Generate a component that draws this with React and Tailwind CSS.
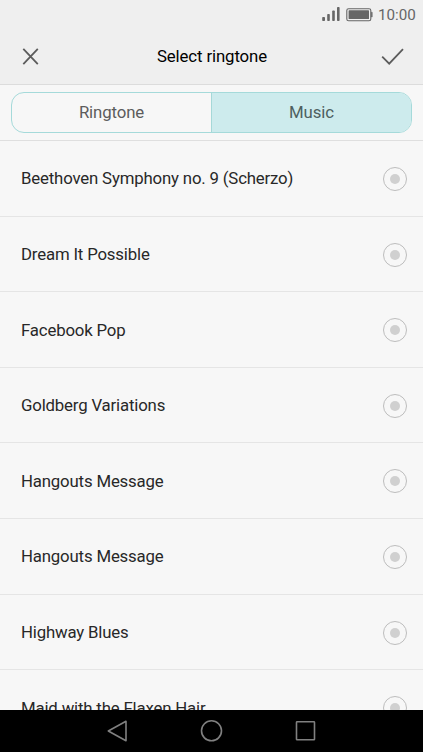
const songs = [
  "Beethoven Symphony no. 9 (Scherzo)",
  "Dream It Possible",
  "Facebook Pop",
  "Goldberg Variations",
  "Hangouts Message",
  "Hangouts Message",
  "Highway Blues",
  "Maid with the Flaxen Hair",
];

const StatusBar = () => {
  return (
    <div className="flex h-7 items-center justify-end pr-[7px] text-[#666666]">
      <svg width="52" height="28" viewBox="0 0 52 28" fill="currentColor">
        <rect x="0.2" y="17" width="2.8" height="4" rx="0.8" />
        <rect x="5.2" y="14" width="2.6" height="7" rx="0.8" />
        <rect x="10.2" y="10.5" width="2.6" height="10.5" rx="0.8" />
        <rect x="15" y="7" width="2.6" height="14" rx="0.8" />
        <rect x="24.8" y="8.7" width="24" height="12" rx="1.8" fill="none" stroke="currentColor" strokeWidth="1.1" />
        <rect x="26.6" y="10.3" width="20.4" height="8.8" rx="0.6" />
        <path d="M49.3 12.3h0.9v4.6h-0.9z" stroke="currentColor" strokeWidth="0.6" />
      </svg>
      <span className="ml-1 w-[38px] whitespace-nowrap pt-px text-[15.2px] leading-5">10:00</span>
    </div>
  );
};

const Header = () => {
  return (
    <header className="flex h-14 items-center justify-between pl-[22px] pr-[19px]">
      <button aria-label="Cancel" className="w-[21px]">
        <svg width="17" height="18" viewBox="0 0 17 18" fill="none" stroke="#5c5c5c" strokeWidth="1.8">
          <path d="M1.3 1.8L15.8 17.1M15.8 1.8L1.3 17.1" />
        </svg>
      </button>
      <h1 className="pt-px text-[16.8px] tracking-[-0.12px] text-black">Select ringtone</h1>
      <button aria-label="Confirm">
        <svg width="23" height="18" viewBox="0 0 23 18" fill="none" stroke="#5c5c5c" strokeWidth="1.8">
          <path d="M1.2 9.6L8.2 16.6L22 2.2" />
        </svg>
      </button>
    </header>
  );
};

const Tabs = () => {
  return (
    <div className="h-14 border-b border-[#dfdfdf] px-[11px] pt-[7px]">
      <div className="flex h-[41px] overflow-hidden rounded-[13px] border border-[#a5dada] text-[16.8px] tracking-[-0.12px] text-[#5c5c5c]">
        <button className="flex-1">Ringtone</button>
        <button className="flex-1 border-l border-[#a5d8d8] bg-[#cdebed] text-[#4e5f60]">Music</button>
      </div>
    </div>
  );
};

const SongRow = ({ title }) => {
  return (
    <li className="flex h-[75.6px] shrink-0 items-center justify-between border-b border-[#e5e5e5] pl-[21px] pr-4 pt-[1.5px]">
      <span className="text-[16.8px] tracking-[-0.17px] text-[#282828]">{title}</span>
      <span className="flex size-6 items-center justify-center rounded-full border border-[#bdbdbd]">
        <span className="size-[10px] rounded-full bg-[#d0d0d0]" />
      </span>
    </li>
  );
};

const NavBar = () => {
  return (
    <nav className="flex h-[42px] shrink-0 items-center justify-center gap-[70px] bg-black">
      <svg width="24" height="24" viewBox="0 0 24 24" fill="none" stroke="#808080" strokeWidth="1.6" strokeLinejoin="round">
        <path d="M20 2.3v19.5L2.3 12z" />
      </svg>
      <svg width="24" height="24" viewBox="0 0 24 24" fill="none" stroke="#808080" strokeWidth="1.6">
        <circle cx="11.5" cy="11.8" r="10" />
      </svg>
      <svg width="24" height="24" viewBox="0 0 24 24" fill="none" stroke="#808080" strokeWidth="1.6">
        <rect x="2.5" y="2.8" width="18" height="18" rx="0.6" />
      </svg>
    </nav>
  );
};

export default function App() {
  return (
    <div className="flex h-[752px] w-[423px] flex-col overflow-hidden bg-[#f7f7f7] font-['Roboto',sans-serif]">
      <div className="h-[85px] shrink-0 border-b border-[#dcdcdc] bg-[#efefef]">
        <StatusBar />
        <Header />
      </div>
      <Tabs />
      <ul className="flex min-h-0 flex-1 flex-col overflow-hidden">
        {songs.map((title, i) => (
          <SongRow key={i} title={title} />
        ))}
      </ul>
      <NavBar />
    </div>
  );
}
